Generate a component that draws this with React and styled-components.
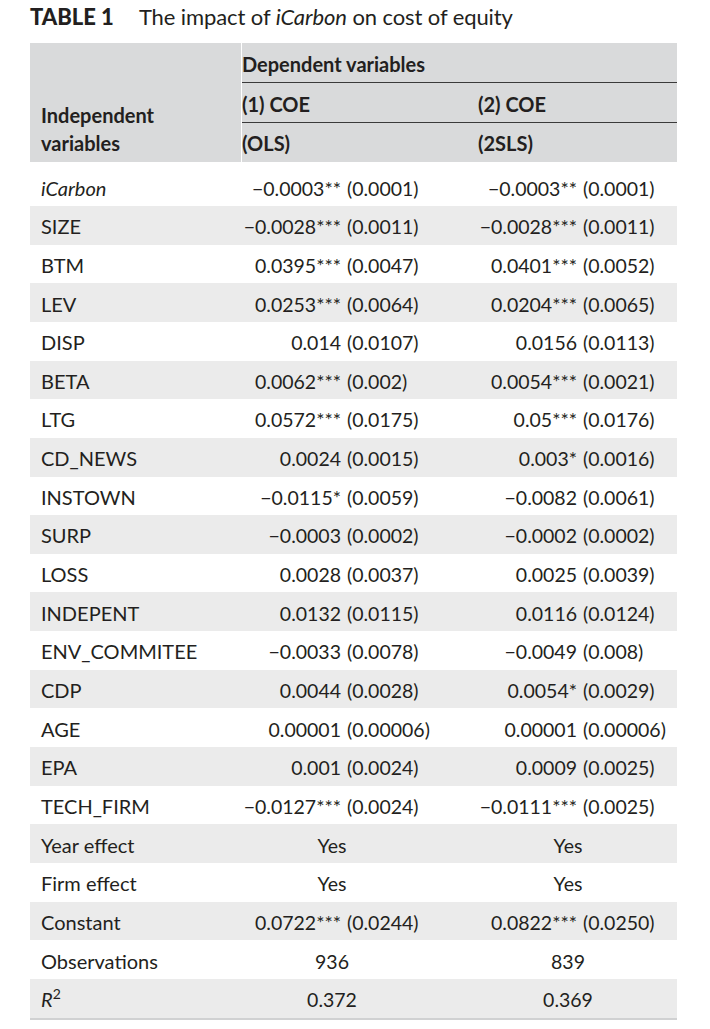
import React from "react";
import styled, { createGlobalStyle } from "styled-components";

const Global = createGlobalStyle`
  html, body { margin: 0; padding: 0; background: #ffffff; }
  body {
    font-family: Lato, "Open Sans", "Liberation Sans", sans-serif;
    color: #231f20;
    -webkit-font-smoothing: antialiased;
  }
`;

const Page = styled.div`
  width: 710px;
  padding: 3.5px 0 0 30px;
  box-sizing: border-box;
`;

const Title = styled.div`
  display: flex;
  align-items: baseline;
  gap: 25px;
  font-size: 22px;
  line-height: 26px;
  height: 26px;
  margin-bottom: 13.5px;
`;

const TableLabel = styled.span`
  font-weight: 900;
`;

const Caption = styled.span`
  font-weight: 400;
  letter-spacing: -0.1px;
`;

const Table = styled.div`
  width: 647px;
  font-size: 20px;
`;

const Header = styled.div`
  display: grid;
  grid-template-columns: 212px 435px;
  height: 119px;
  background: #d9dadb;
  font-weight: 700;
  margin-bottom: 5.25px;
`;

const HeadLeft = styled.div`
  border-right: 1px solid #ffffff;
  display: flex;
  flex-direction: column;
  justify-content: flex-end;
  padding: 0 0 5px 11px;
  line-height: 28px;
`;

const HeadRight = styled.div`
  display: flex;
  flex-direction: column;
`;

const HeadRow = styled.div`
  display: grid;
  grid-template-columns: 236px 198px;
  height: ${(p) => p.$h}px;
  padding-top: ${(p) => p.$pt}px;
  box-sizing: border-box;
  line-height: 22px;
  border-bottom: ${(p) => (p.$line ? "1px solid #3a3a3a" : "none")};
`;

const Row = styled.div`
  display: grid;
  grid-template-columns: 213px 236px 198px;
  align-items: baseline;
  height: 38.66px;
  box-sizing: border-box;
  padding-top: 9.3px;
  line-height: 22px;
  background: ${(p) => (p.$shade ? "#ebebeb" : "#ffffff")};
  white-space: nowrap;
`;

const Label = styled.div`
  padding-left: 11px;
  font-size: 20px;
  font-style: ${(p) => (p.$italic ? "italic" : "normal")};
`;

const ValueCell = styled.div`
  display: grid;
  grid-template-columns: 104px auto;
  font-size: 19.5px;
`;

const Coef = styled.span`
  text-align: right;
  padding-right: 6px;
`;

const SE = styled.span`
  text-align: left;
`;

const Centered = styled.div`
  width: 178px;
  text-align: center;
  font-size: 19.5px;
`;

const Sup = styled.sup`
  font-size: 0.7em;
  line-height: 0;
`;

const BottomRule = styled.div`
  height: 2px;
  background: #d0d1d2;
`;

const rows = [
  { label: "iCarbon", italic: true, a: ["−0.0003**", "(0.0001)"], b: ["−0.0003**", "(0.0001)"] },
  { label: "SIZE", a: ["−0.0028***", "(0.0011)"], b: ["−0.0028***", "(0.0011)"] },
  { label: "BTM", a: ["0.0395***", "(0.0047)"], b: ["0.0401***", "(0.0052)"] },
  { label: "LEV", a: ["0.0253***", "(0.0064)"], b: ["0.0204***", "(0.0065)"] },
  { label: "DISP", a: ["0.014", "(0.0107)"], b: ["0.0156", "(0.0113)"] },
  { label: "BETA", a: ["0.0062***", "(0.002)"], b: ["0.0054***", "(0.0021)"] },
  { label: "LTG", a: ["0.0572***", "(0.0175)"], b: ["0.05***", "(0.0176)"] },
  { label: "CD_NEWS", a: ["0.0024", "(0.0015)"], b: ["0.003*", "(0.0016)"] },
  { label: "INSTOWN", a: ["−0.0115*", "(0.0059)"], b: ["−0.0082", "(0.0061)"] },
  { label: "SURP", a: ["−0.0003", "(0.0002)"], b: ["−0.0002", "(0.0002)"] },
  { label: "LOSS", a: ["0.0028", "(0.0037)"], b: ["0.0025", "(0.0039)"] },
  { label: "INDEPENT", a: ["0.0132", "(0.0115)"], b: ["0.0116", "(0.0124)"] },
  { label: "ENV_COMMITEE", a: ["−0.0033", "(0.0078)"], b: ["−0.0049", "(0.008)"] },
  { label: "CDP", a: ["0.0044", "(0.0028)"], b: ["0.0054*", "(0.0029)"] },
  { label: "AGE", a: ["0.00001", "(0.00006)"], b: ["0.00001", "(0.00006)"] },
  { label: "EPA", a: ["0.001", "(0.0024)"], b: ["0.0009", "(0.0025)"] },
  { label: "TECH_FIRM", a: ["−0.0127***", "(0.0024)"], b: ["−0.0111***", "(0.0025)"] },
  { label: "Year effect", a: "Yes", b: "Yes" },
  { label: "Firm effect", a: "Yes", b: "Yes" },
  { label: "Constant", a: ["0.0722***", "(0.0244)"], b: ["0.0822***", "(0.0250)"] },
  { label: "Observations", a: "936", b: "839" },
  { label: "R2", r2: true, a: "0.372", b: "0.369" },
];

function Value({ v }) {
  if (Array.isArray(v)) {
    return (
      <ValueCell>
        <Coef>{v[0]}</Coef>
        <SE>{v[1]}</SE>
      </ValueCell>
    );
  }
  return <Centered>{v}</Centered>;
}

export default function App() {
  return (
    <Page>
      <Global />
      <Title>
        <TableLabel>TABLE 1</TableLabel>
        <Caption>
          The impact of <i>iCarbon</i> on cost of equity
        </Caption>
      </Title>
      <Table>
        <Header>
          <HeadLeft>
            <span>Independent</span>
            <span>variables</span>
          </HeadLeft>
          <HeadRight>
            <HeadRow $h={40} $pt={10.3} $line>
              <span>Dependent variables</span>
            </HeadRow>
            <HeadRow $h={40} $pt={10.3} $line>
              <span>(1) COE</span>
              <span>(2) COE</span>
            </HeadRow>
            <HeadRow $h={39} $pt={9.3}>
              <span>(OLS)</span>
              <span>(2SLS)</span>
            </HeadRow>
          </HeadRight>
        </Header>
        {rows.map((r, i) => (
          <Row key={r.label} $shade={i % 2 === 1}>
            <Label $italic={r.italic}>
              {r.r2 ? (
                <>
                  <i>R</i>
                  <Sup>2</Sup>
                </>
              ) : (
                r.label
              )}
            </Label>
            <Value v={r.a} />
            <Value v={r.b} />
          </Row>
        ))}
        <BottomRule />
      </Table>
    </Page>
  );
}
